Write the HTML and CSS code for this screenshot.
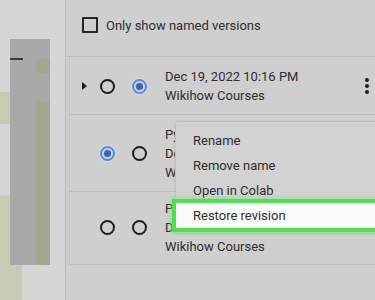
FILE: index.html
```html
<!DOCTYPE html>
<html lang="en">
<head>
  <meta charset="UTF-8" />
  <meta name="viewport" content="width=device-width, initial-scale=1.0"/>
  <title>Revision history</title>
  <link rel="stylesheet" href="styles.css">
</head>
<body>
  <div class="page">
    <div class="side">
      <div class="patch patch-a"></div>
      <div class="patch patch-b"></div>
      <div class="bar">
        <div class="dash"></div>
        <div class="bar-tint bar-tint-top"></div>
        <div class="bar-tint bar-tint-low"></div>
      </div>
    </div>

    <div class="panel">
      <label class="filter">
        <span class="checkbox"></span>
        <span>Only show named versions</span>
      </label>

      <div class="rows">
        <div class="row">
          <span class="toggle"></span>
          <span class="radio"></span>
          <span class="radio on"></span>
          <div class="info">
            <div>Dec 19, 2022 10:16 PM</div>
            <div>Wikihow Courses</div>
          </div>
          <span class="more"><i></i><i></i><i></i></span>
        </div>

        <div class="row">
          <span class="toggle blank"></span>
          <span class="radio on"></span>
          <span class="radio"></span>
          <div class="info">
            <div class="clip">Python basics</div>
            <div class="clip">Dec 19, 2022 10:12 PM</div>
            <div class="clip">Wikihow Courses</div>
          </div>
        </div>

        <div class="row last">
          <span class="toggle blank"></span>
          <span class="radio"></span>
          <span class="radio"></span>
          <div class="info">
            <div class="clip">Pandas lesson</div>
            <div class="clip">Dec 19, 2022 10:05 PM</div>
            <div>Wikihow Courses</div>
          </div>
        </div>
      </div>

      <div class="menu">
        <div class="menu-item">Rename</div>
        <div class="menu-item">Remove name</div>
        <div class="menu-item">Open in Colab</div>
        <div class="menu-item active">Restore revision</div>
      </div>
    </div>
  </div>
</body>
</html>
```

FILE: styles.css
```css
body {
  margin: 0;
  font-family: Roboto, "Liberation Sans", sans-serif;
  font-size: 13px;
  color: #2e2e2e;
  background: #d4d4d4;
}
.page {
  display: flex;
  width: 375px;
  height: 300px;
  overflow: hidden;
}

/* blurred document behind the panel */
.side {
  position: relative;
  width: 65px;
  flex-shrink: 0;
  background: #d6d6d6;
  border-right: 1px solid #bcbcbc;
}
.patch {
  position: absolute;
  background: #c6cbb3;
}
.patch-a {
  left: 0;
  top: 92px;
  width: 22px;
  height: 32px;
}
.patch-b {
  left: 0;
  top: 195px;
  width: 22px;
  height: 105px;
}
.bar {
  position: relative;
  margin: 39px 0 0 10px;
  padding-top: 19px;
  width: 40px;
  height: 207px;
  background: #a9a9a9;
}
.dash {
  width: 13px;
  height: 2px;
  background: #3a3a3a;
}
.bar-tint {
  position: absolute;
  right: 0;
  width: 14px;
  background: #a4a893;
}
.bar-tint-top {
  top: 20px;
  height: 14px;
}
.bar-tint-low {
  top: 63px;
  bottom: 0;
}

.panel {
  position: relative;
  flex: 1;
  background: #cfcfcf;
}
.filter {
  display: flex;
  align-items: center;
  gap: 8px;
  height: 50px;
  padding: 0 0 6px 16px;
  border-bottom: 1px solid #bdbdbd;
}
.checkbox {
  width: 12px;
  height: 12px;
  border: 2px solid #262626;
  border-radius: 1px;
}

.rows {
  margin-left: 3px;
  border-left: 1px solid #c4c4c4;
}
.row {
  display: flex;
  align-items: center;
  padding: 10px 0 9px 12px;
  border-bottom: 1px solid #bdbdbd;
  line-height: 19px;
}
.row.last {
  padding: 7px 0 8px 12px;
}
.toggle {
  width: 0;
  height: 0;
  border-top: 4px solid transparent;
  border-bottom: 4px solid transparent;
  border-left: 5px solid #1e1e1e;
  margin-right: 13px;
}
.toggle.blank {
  border-left-color: transparent;
}
.radio {
  box-sizing: border-box;
  width: 15px;
  height: 15px;
  border: 2px solid #1e1e1e;
  border-radius: 50%;
  margin-right: 17px;
  display: flex;
  align-items: center;
  justify-content: center;
}
.radio.on {
  border-color: #5b8bdb;
  box-shadow: 0 0 0 1px #d6dbe6;
}
.radio.on::after {
  content: "";
  width: 7px;
  height: 7px;
  border-radius: 50%;
  background: #2f63c6;
}
.info {
  flex: 1;
  margin-left: 1px;
}
/* text hidden under the open menu */
.clip {
  width: 10px;
  overflow: hidden;
  white-space: nowrap;
}
.more {
  display: flex;
  flex-direction: column;
  gap: 2px;
  margin-right: 6px;
}
.more i {
  width: 4px;
  height: 4px;
  border-radius: 50%;
  background: #1e1e1e;
}

.menu {
  position: absolute;
  left: 110px;
  top: 122px;
  width: 220px;
  padding: 6px 0 5px;
  background: #d2d2d2;
  box-shadow: 0 0 3px rgba(0, 0, 0, 0.18);
}
.menu-item {
  height: 25px;
  line-height: 25px;
  padding-left: 17px;
}
.menu-item.active {
  position: relative;
  background: #fbfbfb;
  box-shadow: 0 0 0 4px #4fe04f, 0 0 4px 5px rgba(110, 230, 110, 0.6);
}
```
